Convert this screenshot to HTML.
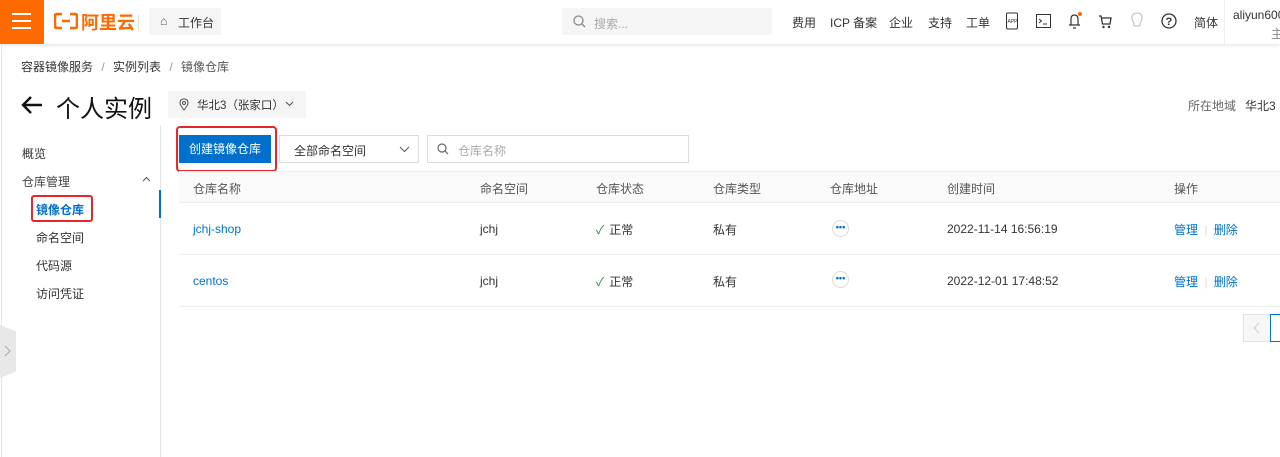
<!DOCTYPE html>
<html><head><meta charset="utf-8"><style>
*{box-sizing:border-box;margin:0;padding:0}
body{width:1280px;height:457px;overflow:hidden;background:#fff;font-family:"Liberation Sans","Noto Sans CJK SC",sans-serif;font-size:12px;color:#333;position:relative}
.a{position:absolute;white-space:nowrap}
.hdr{position:absolute;left:0;top:0;width:1280px;height:44px;background:#fff;box-shadow:0 1px 4px rgba(0,0,0,.12)}
.nav{color:#333;font-size:12px;top:14px}
.ic{position:absolute;top:12px}
.link{color:#0070cc}
</style></head><body>
<div class="hdr"></div>
<div class="a" style="left:0;top:0;width:44px;height:44px;background:#ff6a00"></div>
<div class="a" style="left:12px;top:13px;width:19px;height:2px;background:#fff;box-shadow:0 7px 0 #fff,0 14px 0 #fff"></div>
<svg class="a" style="left:54px;top:12px" width="24" height="18" viewBox="0 0 24 18"><path d="M8 2H3Q1 2 1 4V14Q1 16 3 16H8M16 2H21Q23 2 23 4V14Q23 16 21 16H16M8 9H16" stroke="#ff6a00" stroke-width="2.6" fill="none"/></svg>
<div class="a" style="left:81px;top:9px;font-size:18px;font-weight:bold;color:#ff6a00">阿里云</div>
<div class="a" style="left:138px;top:15px;width:1px;height:16px;background:#ddd"></div>
<div class="a" style="left:149px;top:8px;width:72px;height:27px;background:#f5f5f6"></div>
<div class="a" style="left:160px;top:14px;font-size:12px;color:#555">⌂</div>
<div class="a" style="left:178px;top:14px;color:#333">工作台</div>
<div class="a" style="left:562px;top:8px;width:210px;height:27px;background:#f5f5f6"></div>
<svg class="a" style="left:573px;top:15px" width="13" height="13"><circle cx="5.5" cy="5.5" r="4.5" stroke="#888" fill="none" stroke-width="1.3"/><path d="M9 9L12 12" stroke="#888" stroke-width="1.3"/></svg>
<div class="a" style="left:594px;top:15px;color:#aaa">搜索...</div>
<div class="a nav" style="left:792px">费用</div>
<div class="a nav" style="left:830px">ICP 备案</div>
<div class="a nav" style="left:889px">企业</div>
<div class="a nav" style="left:928px">支持</div>
<div class="a nav" style="left:966px">工单</div>
<svg class="ic" style="left:1005px" width="14" height="18"><rect x="1.5" y="1" width="11" height="16" rx="1.5" stroke="#333" fill="none"/><text x="2.5" y="11" font-size="5" fill="#333" font-family="Liberation Sans">APP</text></svg>
<svg class="ic" style="left:1036px;top:14px" width="15" height="14"><rect x=".5" y=".5" width="14" height="13" stroke="#333" fill="none"/><path d="M3 5L5.5 7L3 9M7 10H11" stroke="#333" fill="none"/></svg>
<svg class="ic" style="left:1067px" width="16" height="18"><path d="M4 13V7Q4 3 7.5 3Q11 3 11 7V13M2 13H13M6 16H9" stroke="#333" fill="none" stroke-width="1.2"/><circle cx="13" cy="2" r="2" fill="#ff6a00"/></svg>
<svg class="ic" style="left:1098px;top:14px" width="15" height="15"><path d="M1 2H3L4.5 10H12L13 4H4" stroke="#333" fill="none" stroke-width="1.3"/><circle cx="5.5" cy="13" r="1.2" fill="#333"/><circle cx="11" cy="13" r="1.2" fill="#333"/></svg>
<svg class="ic" style="left:1131px" width="12" height="18"><path d="M3 11Q1 9 1 6Q1 1 6 1Q11 1 11 6Q11 9 9 11V14H3Z" stroke="#bbb" fill="none"/></svg>
<svg class="ic" style="left:1161px;top:13px" width="16" height="16"><circle cx="8" cy="8" r="7" stroke="#333" fill="none" stroke-width="1.3"/><text x="4.5" y="12" font-size="11" font-weight="bold" fill="#333" font-family="Liberation Sans">?</text></svg>
<div class="a nav" style="left:1194px">简体</div>
<div class="a" style="left:1224px;top:0;width:1px;height:44px;background:#eee"></div>
<div class="a" style="left:1233px;top:8px;color:#333">aliyun6000</div>
<div class="a" style="left:1271px;top:25px;color:#888">主</div>

<div class="a" style="left:21px;top:58px;color:#333">容器镜像服务 <span style="color:#999;margin:0 5px">/</span> 实例列表 <span style="color:#999;margin:0 5px">/</span> <span style="color:#555">镜像仓库</span></div>
<svg class="a" style="left:20px;top:95px" width="24" height="20"><path d="M22 10H3M11 2L3 10L11 18" stroke="#111" stroke-width="2.4" fill="none"/></svg>
<div class="a" style="left:56px;top:89px;font-size:24px;color:#111">个人实例</div>
<div class="a" style="left:168px;top:91px;width:138px;height:27px;background:#f5f5f6"></div>
<svg class="a" style="left:179px;top:98px" width="10" height="13"><path d="M5 12Q1 7 1 5Q1 1 5 1Q9 1 9 5Q9 7 5 12Z" stroke="#555" fill="none"/><circle cx="5" cy="5" r="1.5" stroke="#555" fill="none"/></svg>
<div class="a" style="left:197px;top:97px;color:#333;font-size:11.5px">华北3（张家口）</div>
<svg class="a" style="left:285px;top:101px" width="9" height="6"><path d="M1 1L4.5 4.5L8 1" stroke="#555" fill="none"/></svg>
<div class="a" style="left:1188px;top:97px;color:#666">所在地域</div>
<div class="a" style="left:1245px;top:97px;color:#333">华北3（</div>

<div class="a" style="left:1px;top:44px;width:1px;height:413px;background:#e5e5e5"></div>
<div class="a" style="left:160px;top:125px;width:1px;height:332px;background:#e3e3e3"></div>
<div class="a" style="left:159px;top:190px;width:2px;height:28px;background:#0070cc"></div>
<div class="a" style="left:22px;top:145px">概览</div>
<div class="a" style="left:22px;top:173px;color:#444">仓库管理</div>
<svg class="a" style="left:142px;top:176px" width="9" height="6"><path d="M1 5L4.5 1.5L8 5" stroke="#555" fill="none"/></svg>
<div class="a" style="left:36px;top:201px;color:#0070cc;font-weight:bold">镜像仓库</div>
<div class="a" style="left:31px;top:195px;width:62px;height:27px;border:2px solid #e5262a;border-radius:3px"></div>
<div class="a" style="left:36px;top:229px">命名空间</div>
<div class="a" style="left:36px;top:257px">代码源</div>
<div class="a" style="left:36px;top:285px">访问凭证</div>
<div class="a" style="left:0;top:325px;width:16px;height:53px;background:#e8e8e8;clip-path:polygon(0 0,100% 12%,100% 88%,0 100%)"></div>
<svg class="a" style="left:4px;top:345px" width="7" height="12"><path d="M1 1L6 6L1 11" stroke="#aaa" fill="none"/></svg>

<div class="a" style="left:179px;top:135px;width:92px;height:28px;background:#0070cc;color:#fff;text-align:center;line-height:28px">创建镜像仓库</div>
<div class="a" style="left:176px;top:126px;width:101px;height:46px;border:2px solid #e5262a;border-radius:4px"></div>
<div class="a" style="left:279px;top:135px;width:140px;height:28px;border:1px solid #ddd"></div>
<div class="a" style="left:294px;top:142px">全部命名空间</div>
<svg class="a" style="left:399px;top:146px" width="11" height="7"><path d="M1 1L5.5 5.5L10 1" stroke="#555" fill="none"/></svg>
<div class="a" style="left:427px;top:135px;width:262px;height:28px;border:1px solid #ddd"></div>
<svg class="a" style="left:437px;top:143px" width="12" height="12"><circle cx="5" cy="5" r="4" stroke="#666" fill="none" stroke-width="1.2"/><path d="M8 8L11 11" stroke="#666" stroke-width="1.2"/></svg>
<div class="a" style="left:458px;top:142px;color:#aaa">仓库名称</div>

<div class="a" style="left:179px;top:171px;width:1101px;height:32px;background:#fafafa;border-top:1px solid #eee;border-bottom:1px solid #eee"></div>
<div class="a" style="left:193px;top:180px;color:#555">仓库名称</div>
<div class="a" style="left:480px;top:180px;color:#555">命名空间</div>
<div class="a" style="left:596px;top:180px;color:#555">仓库状态</div>
<div class="a" style="left:713px;top:180px;color:#555">仓库类型</div>
<div class="a" style="left:830px;top:180px;color:#555">仓库地址</div>
<div class="a" style="left:947px;top:180px;color:#555">创建时间</div>
<div class="a" style="left:1174px;top:180px;color:#555">操作</div>

<div class="a" style="left:179px;top:254px;width:1101px;height:1px;background:#eee"></div>
<div class="a" style="left:179px;top:306px;width:1101px;height:1px;background:#eee"></div>

<div class="a link" style="left:193px;top:222px">jchj-shop</div>
<div class="a" style="left:480px;top:222px">jchj</div>
<div class="a" style="left:596px;top:221px"><span style="color:#1e8e3e;margin-right:5px">✓</span>正常</div>
<div class="a" style="left:713px;top:221px">私有</div>
<div class="a" style="left:832px;top:220px;width:17px;height:17px;border:1px solid #ddd;border-radius:50%;color:#0070cc;font-size:9px;line-height:13px;text-align:center;font-weight:bold">•••</div>
<div class="a" style="left:947px;top:222px">2022-11-14 16:56:19</div>
<div class="a link" style="left:1174px;top:221px">管理 <span style="color:#ddd;margin:0 3px">|</span> 删除</div>

<div class="a link" style="left:193px;top:274px">centos</div>
<div class="a" style="left:480px;top:274px">jchj</div>
<div class="a" style="left:596px;top:273px"><span style="color:#1e8e3e;margin-right:5px">✓</span>正常</div>
<div class="a" style="left:713px;top:273px">私有</div>
<div class="a" style="left:832px;top:271px;width:17px;height:17px;border:1px solid #ddd;border-radius:50%;color:#0070cc;font-size:9px;line-height:13px;text-align:center;font-weight:bold">•••</div>
<div class="a" style="left:947px;top:274px">2022-12-01 17:48:52</div>
<div class="a link" style="left:1174px;top:273px">管理 <span style="color:#ddd;margin:0 3px">|</span> 删除</div>

<div class="a" style="left:1243px;top:314px;width:28px;height:28px;border:1px solid #e3e3e3;background:#f7f7f7"></div>
<svg class="a" style="left:1253px;top:322px" width="7" height="12"><path d="M6 1L1 6L6 11" stroke="#ccc" fill="none"/></svg>
<div class="a" style="left:1270px;top:314px;width:12px;height:28px;border:1px solid #0070cc"></div>
</body></html>
